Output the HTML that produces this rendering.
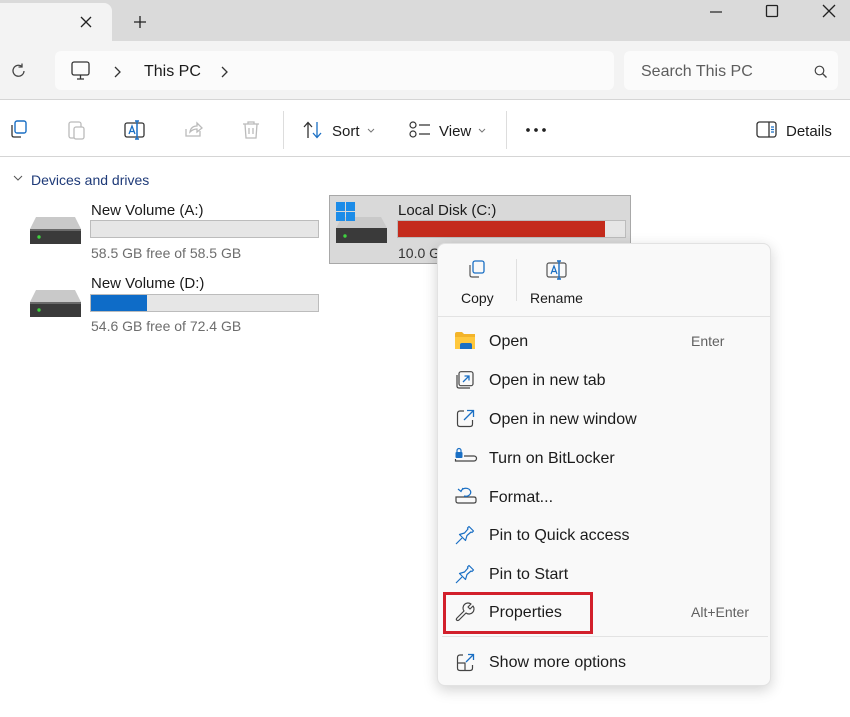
<!DOCTYPE html>
<html><head><style>
*{margin:0;padding:0;box-sizing:border-box}
body{width:850px;height:717px;background:#fff;font-family:"Liberation Sans",sans-serif;position:relative;overflow:hidden;color:#1b1b1b}
.a{position:absolute}
.t{font-size:15px;white-space:nowrap;margin-top:1px}
svg{position:absolute;overflow:visible}
.mi{position:absolute;left:489px;font-size:16px;color:#1b1b1b;margin-top:1px}
.sc{position:absolute;font-size:14px;color:#616161}
</style></head><body>
<div class="a" style="left:0;top:0;width:850px;height:41px;background:#dadada"></div>
<div class="a" style="left:0;top:3px;width:112px;height:38px;background:#f3f3f3;border-radius:0 8px 0 0"></div>
<svg style="left:80px;top:16px" width="12" height="12"><path d="M1 1L11 11M11 1L1 11" stroke="#222" stroke-width="1.3"/></svg>
<svg style="left:133px;top:15px" width="14" height="14"><path d="M7 1V13M1 7H13" stroke="#222" stroke-width="1.3"/></svg>
<svg style="left:710px;top:11px" width="12" height="2"><path d="M0 1H12" stroke="#222" stroke-width="1.2"/></svg>
<svg style="left:766px;top:5px" width="12" height="12"><rect x="0.5" y="0.5" width="11" height="11" rx="1" fill="none" stroke="#222" stroke-width="1.3"/></svg>
<svg style="left:823px;top:5px" width="12" height="12"><path d="M0 0L12 12M12 0L0 12" stroke="#222" stroke-width="1.3"/></svg>
<div class="a" style="left:0;top:41px;width:850px;height:59px;background:#f3f3f3;border-bottom:1px solid #d5d5d5"></div>
<svg style="left:11px;top:63px" width="16" height="16"><path d="M13 8A5.5 5.5 0 1 1 11 3.5M11 0.5V4H7.5" fill="none" stroke="#444" stroke-width="1.3"/></svg>
<div class="a" style="left:55px;top:51px;width:559px;height:39px;background:#fbfbfb;border-radius:6px"></div>
<svg style="left:71px;top:61px" width="20" height="20"><rect x="1" y="1" width="17" height="13" rx="2" fill="none" stroke="#333" stroke-width="1.3"/><path d="M6 18H13M9.5 14V18" stroke="#333" stroke-width="1.3"/></svg>
<svg style="left:114px;top:66px" width="8" height="12"><path d="M1 1L6 6L1 11" fill="none" stroke="#333" stroke-width="1.3"/></svg>
<div class="a t" style="left:144px;top:62px;font-size:16px">This PC</div>
<svg style="left:221px;top:66px" width="8" height="12"><path d="M1 1L6 6L1 11" fill="none" stroke="#333" stroke-width="1.3"/></svg>
<div class="a" style="left:624px;top:51px;width:214px;height:39px;background:#fbfbfb;border-radius:6px"></div>
<div class="a t" style="left:641px;top:62px;font-size:16px;color:#5d5d5d">Search This PC</div>
<svg style="left:814px;top:65px" width="14" height="14"><circle cx="5.5" cy="5.5" r="4.3" fill="none" stroke="#444" stroke-width="1.2"/><path d="M8.5 8.5L12.5 12.5" stroke="#444" stroke-width="1.3"/></svg>
<div class="a" style="left:0;top:156px;width:850px;height:1px;background:#d5d5d5"></div>
<svg style="left:9px;top:120px" width="20" height="20"><rect x="6" y="1" width="11" height="12" rx="2" fill="none" stroke="#1a6fc4" stroke-width="1.4"/><path d="M3 5V15Q3 17 5 17H12" fill="none" stroke="#333" stroke-width="1.3"/></svg>
<svg style="left:67px;top:120px" width="20" height="20"><rect x="2" y="2" width="12" height="16" rx="2" fill="none" stroke="#bbb" stroke-width="1.3"/><rect x="7" y="7" width="10" height="12" rx="2" fill="#fff" stroke="#bbb" stroke-width="1.3"/></svg>
<svg style="left:124px;top:120px" width="22" height="20"><rect x="1" y="3" width="19" height="14" rx="2" fill="none" stroke="#333" stroke-width="1.3"/><path d="M5 14L8 6L11 14M6 11.5H10" fill="none" stroke="#1a6fc4" stroke-width="1.3"/><path d="M13 1V19M11 1H15M11 19H15" stroke="#1a6fc4" stroke-width="1.5"/></svg>
<svg style="left:183px;top:120px" width="20" height="20"><path d="M3 9V16H17V11M7 12Q8 6 14 6V3L19 8L14 12V9Q10 9 7 12Z" fill="none" stroke="#bbb" stroke-width="1.3"/></svg>
<svg style="left:241px;top:120px" width="20" height="20"><path d="M2 4H18M7 4V2H13V4M4 4L5 18H15L16 4M8 8V14M12 8V14" fill="none" stroke="#bbb" stroke-width="1.3"/></svg>
<div class="a" style="left:283px;top:111px;width:1px;height:38px;background:#ddd"></div>
<svg style="left:303px;top:121px" width="20" height="18"><path d="M5 17V2M1 6L5 1.5L9 6" fill="none" stroke="#333" stroke-width="1.3"/><path d="M14 1V16M10 12L14 16.5L18 12" fill="none" stroke="#1a6fc4" stroke-width="1.3"/></svg>
<div class="a t" style="left:332px;top:122px">Sort</div>
<svg style="left:367px;top:128px" width="8" height="5"><path d="M1 1L4 4L7 1" fill="none" stroke="#777"/></svg>
<svg style="left:409px;top:121px" width="22" height="18"><rect x="1" y="1" width="6" height="6" rx="3" fill="none" stroke="#333" stroke-width="1.2"/><rect x="1" y="10" width="6" height="6" rx="3" fill="none" stroke="#333" stroke-width="1.2"/><path d="M10 4H21M10 13H21" stroke="#333" stroke-width="1.3"/></svg>
<div class="a t" style="left:439px;top:122px">View</div>
<svg style="left:478px;top:128px" width="8" height="5"><path d="M1 1L4 4L7 1" fill="none" stroke="#777"/></svg>
<div class="a" style="left:506px;top:111px;width:1px;height:38px;background:#ddd"></div>
<div class="a" style="left:526px;top:128px;width:20px;height:4px;background:radial-gradient(circle at 2px 2px,#222 1.7px,transparent 2px) 0 0/8px 4px repeat-x"></div>
<svg style="left:756px;top:121px" width="22" height="17"><rect x="1" y="1" width="19" height="15" rx="2.5" fill="none" stroke="#333" stroke-width="1.3"/><path d="M13 1V16" stroke="#333" stroke-width="1.3"/><path d="M15 6H18M15 8.5H18M15 11H18" stroke="#1a6fc4" stroke-width="1.2"/></svg>
<div class="a t" style="left:786px;top:122px">Details</div>
<svg style="left:13px;top:175px" width="10" height="6"><path d="M1 1L5 5L9 1" fill="none" stroke="#555"/></svg>
<div class="a t" style="left:31px;top:171px;color:#1e3a78;font-size:14px">Devices and drives</div>
<svg style="left:30px;top:217px" width="52" height="28"><path d="M6 0H45L51 12H0Z" fill="#c9c9c9"/><rect x="0" y="12" width="51" height="15" fill="#3a3a3a"/><rect x="0" y="12" width="51" height="2" fill="#6a6a6a"/><circle cx="9" cy="20" r="1.7" fill="#3fd23f"/></svg>
<div class="a t" style="left:91px;top:201px">New Volume (A:)</div>
<div class="a" style="left:90px;top:220px;width:229px;height:18px;background:#e6e6e6;border:1px solid #bcbcbc"></div>
<div class="a t" style="left:91px;top:244px;color:#6d6d6d;font-size:14px">58.5 GB free of 58.5 GB</div>
<svg style="left:30px;top:290px" width="52" height="28"><path d="M6 0H45L51 12H0Z" fill="#c9c9c9"/><rect x="0" y="12" width="51" height="15" fill="#3a3a3a"/><rect x="0" y="12" width="51" height="2" fill="#6a6a6a"/><circle cx="9" cy="20" r="1.7" fill="#3fd23f"/></svg>
<div class="a t" style="left:91px;top:274px">New Volume (D:)</div>
<div class="a" style="left:90px;top:294px;width:229px;height:18px;background:#e6e6e6;border:1px solid #bcbcbc"><div style="width:56px;height:16px;background:#0e6cc8"></div></div>
<div class="a t" style="left:91px;top:317px;color:#6d6d6d;font-size:14px">54.6 GB free of 72.4 GB</div>
<div class="a" style="left:329px;top:195px;width:302px;height:69px;background:#d9d9d9;border:1px solid #a8a8a8"></div>
<svg style="left:336px;top:202px" width="52" height="42"><path d="M6 15H45L51 26H0Z" fill="#c9c9c9"/><rect x="0" y="26" width="51" height="15" fill="#3a3a3a"/><circle cx="9" cy="34" r="1.7" fill="#3fd23f"/><rect x="0" y="0" width="9" height="9" fill="#1c8ce8"/><rect x="10" y="0" width="9" height="9" fill="#1c8ce8"/><rect x="0" y="10" width="9" height="9" fill="#1c8ce8"/><rect x="10" y="10" width="9" height="9" fill="#1c8ce8"/></svg>
<div class="a t" style="left:398px;top:201px">Local Disk (C:)</div>
<div class="a" style="left:397px;top:220px;width:229px;height:18px;background:#e6e6e6;border:1px solid #bcbcbc"><div style="width:207px;height:16px;background:#c42b1c"></div></div>
<div class="a t" style="left:398px;top:244px;color:#333;font-size:14px">10.0 GB</div>
<div class="a" style="left:437px;top:243px;width:334px;height:443px;background:#f9f9f9;border:1px solid #e2e2e2;border-radius:8px;box-shadow:0 4px 14px rgba(0,0,0,.18)"></div>
<div class="a" style="left:516px;top:259px;width:1px;height:42px;background:#e0e0e0"></div>
<div class="a" style="left:438px;top:316px;width:332px;height:1px;background:#e3e3e3"></div>
<svg style="left:467px;top:260px" width="20" height="20"><rect x="6" y="1" width="11" height="12" rx="2" fill="none" stroke="#1a6fc4" stroke-width="1.3"/><path d="M3 5V15Q3 17 5 17H12" fill="none" stroke="#555" stroke-width="1.2"/></svg>
<div class="a t" style="left:461px;top:289px;font-size:14px">Copy</div>
<svg style="left:546px;top:260px" width="22" height="20"><rect x="1" y="3" width="19" height="14" rx="2" fill="none" stroke="#555" stroke-width="1.2"/><path d="M5 14L8 6L11 14M6 11.5H10" fill="none" stroke="#1a6fc4" stroke-width="1.2"/><path d="M13 1V19M11 1H15M11 19H15" stroke="#1a6fc4" stroke-width="1.4"/></svg>
<div class="a t" style="left:530px;top:289px;font-size:14px">Rename</div>
<svg style="left:455px;top:332px" width="20" height="18"><path d="M0 2Q0 0 2 0H7L9 2H20V17H0Z" fill="#f3b42a"/><rect x="0" y="5" width="20" height="12" fill="#ffc83d"/><path d="M5 17V13Q5 11 7 11H15Q17 11 17 13V17Z" fill="#1a6fc4"/></svg>
<div class="mi" style="top:332px">Open</div><div class="sc" style="left:691px;top:333px">Enter</div>
<svg style="left:456px;top:371px" width="18" height="18"><rect x="3" y="0.7" width="14" height="14" rx="2" fill="none" stroke="#444" stroke-width="1.2"/><path d="M1 4V15Q1 17 3 17H14" fill="none" stroke="#444" stroke-width="1.2"/><path d="M7 11L13 5M8.5 5H13V9.5" fill="none" stroke="#1a6fc4" stroke-width="1.3"/></svg>
<div class="mi" style="top:371px">Open in new tab</div>
<svg style="left:456px;top:409px" width="19" height="19"><path d="M8 2H4Q1.5 2 1.5 4.5V15Q1.5 17.5 4 17.5H14Q16.5 17.5 16.5 15V11" fill="none" stroke="#444" stroke-width="1.2"/><path d="M8 11L17 2M11 1.5H17.5V8" fill="none" stroke="#1a6fc4" stroke-width="1.3"/></svg>
<div class="mi" style="top:410px">Open in new window</div>
<svg style="left:455px;top:448px" width="22" height="16"><rect x="0.5" y="4" width="7" height="6" rx="1" fill="#1a6fc4"/><path d="M2 4V2.5A2 2 0 0 1 6 2.5V4" fill="none" stroke="#1a6fc4" stroke-width="1.2"/><path d="M0.5 11V13H19A2.5 2.5 0 0 0 19 8H9" fill="none" stroke="#444" stroke-width="1.2"/></svg>
<div class="mi" style="top:449px">Turn on BitLocker</div>
<svg style="left:455px;top:486px" width="22" height="18"><path d="M1 11H19Q21 11 21 13V15Q21 17 19 17H3Q1 17 1 15Z" fill="none" stroke="#444" stroke-width="1.2"/><path d="M6 5A5 4 0 1 1 9 10M3 3L6 5.5L8 2" fill="none" stroke="#1a6fc4" stroke-width="1.2"/></svg>
<div class="mi" style="top:488px">Format...</div>
<svg style="left:455px;top:525px" width="20" height="20"><path d="M1 19L7 13M4.5 9.5L10.5 15.5L12 10.5L16 7L17 7.5L18.5 6L14 1.5L12.5 3L13 4L9.5 8Z" fill="none" stroke="#1a6fc4" stroke-width="1.2" stroke-linejoin="round"/></svg>
<div class="mi" style="top:526px">Pin to Quick access</div>
<svg style="left:455px;top:564px" width="20" height="20"><path d="M1 19L7 13M4.5 9.5L10.5 15.5L12 10.5L16 7L17 7.5L18.5 6L14 1.5L12.5 3L13 4L9.5 8Z" fill="none" stroke="#1a6fc4" stroke-width="1.2" stroke-linejoin="round"/></svg>
<div class="mi" style="top:565px">Pin to Start</div>
<svg style="left:455px;top:602px" width="20" height="20"><path d="M2 16L9 9A5 5 0 0 1 16 2L13 5L15 7L18 4A5 5 0 0 1 11 11L4 18Q2.5 19 1.5 18Q1 17 2 16Z" fill="none" stroke="#444" stroke-width="1.2" stroke-linejoin="round"/></svg>
<div class="mi" style="top:603px">Properties</div><div class="sc" style="left:691px;top:604px">Alt+Enter</div>
<div class="a" style="left:443px;top:592px;width:150px;height:42px;border:3px solid #d21f2b"></div>
<div class="a" style="left:442px;top:636px;width:326px;height:1px;background:#e3e3e3"></div>
<svg style="left:456px;top:653px" width="19" height="19"><path d="M7 2H4Q1.5 2 1.5 4.5V15Q1.5 17.5 4 17.5H14Q16.5 17.5 16.5 15V12M1.5 10H9V17.5" fill="none" stroke="#444" stroke-width="1.2"/><path d="M10 9L17 2M12 1.5H17.5V7" fill="none" stroke="#1a6fc4" stroke-width="1.3"/></svg>
<div class="mi" style="top:653px">Show more options</div>
</body></html>
